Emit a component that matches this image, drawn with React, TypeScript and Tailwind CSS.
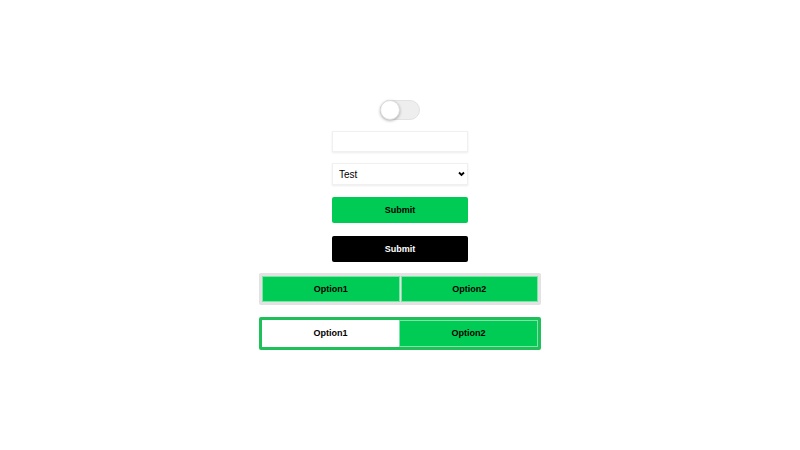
import { FC } from "react";

const App: FC = () => (
    <div className="w-[800px] h-[450px] bg-white flex flex-col items-center pt-[100px] font-['Liberation_Sans',Arial,sans-serif]">
        <div className="w-[40px] h-[20px] rounded-full bg-[#eeeeee] border border-[#e2e2e2] relative">
            <div className="absolute -left-px -top-px w-[20px] h-[20px] rounded-full bg-white border border-[#dddddd] shadow-[0_1px_3px_rgba(0,0,0,0.3)]" />
        </div>

        <input
            className="mt-[11px] w-[136px] h-[21px] border border-[#f0f0f0] shadow-[0_1px_2px_rgba(0,0,0,0.08)] outline-none"
            type="text"
        />

        <div className="mt-[11px] w-[136px] h-[22px] relative">
            <select
                className="block w-full h-full appearance-none border border-[#f0f0f0] shadow-[0_1px_2px_rgba(0,0,0,0.08)] text-[10px] pl-[6px] bg-white text-black outline-none"
                defaultValue="Test"
            >
                <option>Test</option>
            </select>
            <svg className="absolute right-[3px] top-[8px] w-[7px] h-[6px] pointer-events-none" viewBox="0 0 7 6">
                <path d="M1 1.5 L3.5 4 L6 1.5" fill="none" stroke="black" strokeWidth="1.8" />
            </svg>
        </div>

        <button className="mt-[12px] w-[136px] h-[26px] rounded-[2px] bg-[#00cc55] text-black text-[9px] font-bold pt-px">
            Submit
        </button>

        <button className="mt-[13px] w-[136px] h-[26px] rounded-[2px] bg-black text-white text-[9px] font-bold pt-px">
            Submit
        </button>

        <div className="mt-[11px] w-[282px] h-[32px] bg-[#e2e2e2] rounded-[2px] p-[3px] flex gap-[1px]">
            <button className="flex-1 bg-[#00cc55] border border-[#7de3a6] text-black text-[9px] font-bold pt-px">Option1</button>
            <button className="flex-1 bg-[#00cc55] border border-[#7de3a6] text-black text-[9px] font-bold pt-px">Option2</button>
        </div>

        <div className="mt-[12px] w-[282px] h-[33px] border-[3px] border-[#1fbf5a] rounded-[2px] flex">
            <button className="flex-1 bg-white text-black text-[9px] font-bold pt-px">Option1</button>
            <button className="flex-1 bg-[#00cc55] border border-[#7de3a6] text-black text-[9px] font-bold pt-px">Option2</button>
        </div>
    </div>
);

export default App;
